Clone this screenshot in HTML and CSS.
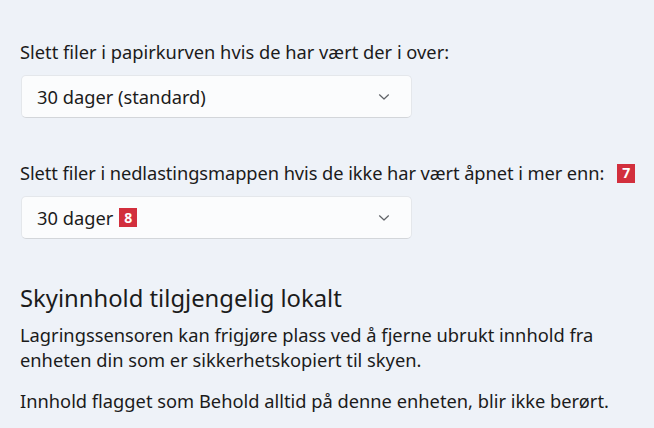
FILE: index.html
```html
<!DOCTYPE html>
<html lang="no">
<head>
<meta charset="utf-8">
<link rel="stylesheet" href="styles.css">
</head>
<body>
<main class="page">
  <section class="setting">
    <p class="label">Slett filer i papirkurven hvis de har vært der i over:</p>
    <div class="select">
      <span class="value">30 dager (standard)</span>
      <svg class="chev" width="12" height="8" viewBox="0 0 12 8"><path d="M1.5 1.8 L6 6 L10.5 1.8" fill="none" stroke="#5f6267" stroke-width="1.2" stroke-linecap="round" stroke-linejoin="round"/></svg>
    </div>
  </section>
  <section class="setting second">
    <p class="label tight">Slett filer i nedlastingsmappen hvis de ikke har vært åpnet i mer enn:<span class="badge">7</span></p>
    <div class="select">
      <span class="value">30 dager<span class="badge">8</span></span>
      <svg class="chev" width="12" height="8" viewBox="0 0 12 8"><path d="M1.5 1.8 L6 6 L10.5 1.8" fill="none" stroke="#5f6267" stroke-width="1.2" stroke-linecap="round" stroke-linejoin="round"/></svg>
    </div>
  </section>
  <section class="cloud">
    <h2 class="title">Skyinnhold tilgjengelig lokalt</h2>
    <p class="desc">Lagringssensoren kan frigjøre plass ved å fjerne ubrukt innhold fra enheten din som er sikkerhetskopiert til skyen.</p>
    <p class="desc note">Innhold flagget som Behold alltid på denne enheten, blir ikke berørt.</p>
  </section>
</main>
</body>
</html>
```
FILE: styles.css
```css
html,body{margin:0;padding:0}
body{background:#eef2f8;color:#1b1b1b;font-family:"Noto Sans","Open Sans",sans-serif;width:654px;height:428px;overflow:hidden}
.page{padding:40px 0 0 20px}
.setting{display:flex;flex-direction:column;gap:11px}
.second{margin-top:43px}
.label{margin:0;font-size:18.3px;line-height:24px;white-space:nowrap;display:flex;align-items:center}
.tight{letter-spacing:-0.08px}
.select{box-sizing:border-box;width:391px;height:43px;margin-left:1px;background:#fbfcfd;border:1px solid #e4e7eb;border-bottom-color:#d3d6da;border-radius:5px;display:flex;align-items:center;justify-content:space-between;padding:0 21px 0 15px}
.value{font-size:18.3px;display:flex;align-items:center}
.chev{display:block;margin-top:1px}
.badge{display:inline-flex;align-items:center;justify-content:center;width:18px;height:19px;background:#d22f3d;color:#fff;font-weight:700;font-size:14px;letter-spacing:0;margin-left:13px}
.value .badge{margin-left:6px}
.cloud{margin-top:44px}
.title{margin:0;font-weight:400;font-size:23.8px;line-height:30px}
.desc{margin:9px 0 0;font-size:18.3px;line-height:25px;width:620px}
.note{margin-top:16px}
```
